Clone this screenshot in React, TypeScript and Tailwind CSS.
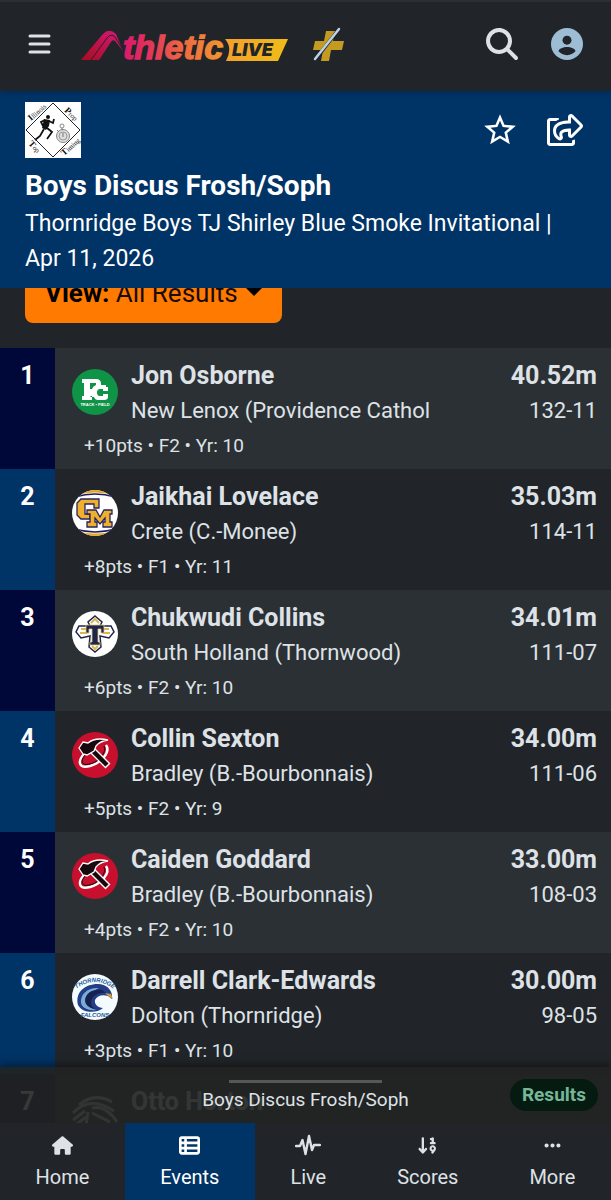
import type { ReactNode } from "react";
import { FaArrowDown19, FaEllipsis, FaHouse, FaMagnifyingGlass, FaTableList } from "react-icons/fa6";
import { FaRegShareSquare } from "react-icons/fa";
import { MdStarBorder } from "react-icons/md";

type Result = {
  place: number;
  name: string;
  school: string;
  mark: string;
  imperial: string;
  meta: string;
  logo: ReactNode;
};

function ProvidenceLogo() {
  return (
    <svg viewBox="0 0 46 46" className="size-full" aria-hidden="true">
      <circle cx="23" cy="23" r="23" fill="#0f9347" />
      <path
        fill="#fff"
        fillRule="evenodd"
        d="M10 10H24Q29 10 29 15V16H34V18H36V22H31V20H28Q25 20 25 23.500Q25 27 28 27H31V25H36V28Q36 31 32 31H26Q23 31 22 28H18.500V27H20V31H10V27H12V14H10ZM18 14V20H20Q21 17 24 16V14Z"
      />
      <text x="23" y="37" textAnchor="middle" fill="#fff" fontSize="4" fontWeight="700" fontFamily="Liberation Sans, sans-serif">
        TRACK • FIELD
      </text>
    </svg>
  );
}

function CreteLogo() {
  return (
    <svg viewBox="0 0 46 46" className="size-full" aria-hidden="true">
      <clipPath id="crete">
        <circle cx="23" cy="23" r="23" />
      </clipPath>
      <g clipPath="url(#crete)">
        <path fill="#fff" d="M0 0H46V46H0z" />
        <path fill="#e5a823" d="M0 0H46V6Q23-1 0 6ZM0 46H46V40Q23 47 0 40Z" />
        <path fill="none" stroke="#1d1b5e" strokeWidth="1.500" d="M3 7Q23 1 43 7M3 39Q23 45 43 39" />
        <path
          fill="#eeb02d"
          stroke="#27235f"
          strokeWidth="1.300"
          d="M9 9H27V18H22V14H13V24H18V29H9L5 25V13Z"
        />
        <path
          fill="#eeb02d"
          stroke="#27235f"
          strokeWidth="1.300"
          d="M15 20H24L28 27L32 20H40V24H38V32H40V37H31V32H33V28L28 34L23 28V32H25V37H15V32H18V24H15Z"
        />
      </g>
    </svg>
  );
}

function ThornwoodLogo() {
  return (
    <svg viewBox="0 0 46 46" className="size-full" aria-hidden="true">
      <circle cx="23" cy="23" r="23" fill="#fff" />
      <path
        fill="#fff"
        stroke="#20264b"
        strokeWidth="1.500"
        d="M23 5L30 11L28 15L39 15L42 21L37 27L28 25L29 36L23 41L17 36L18 25L9 27L4 21L7 15L18 15L16 11Z"
      />
      <path
        fill="none"
        stroke="#d8b84c"
        strokeWidth="2"
        d="M19 12L23 8L27 12M9 18H15M37 18H31M8 22H15M38 22H31M20 35L23 38L26 35"
      />
      <path fill="#20264b" stroke="#d8c47a" strokeWidth="0.800" d="M14 14H32V22H29V18H26V31H28V34H18V31H20V18H17V22H14Z" />
    </svg>
  );
}

function BradleyLogo() {
  return (
    <svg viewBox="0 0 46 46" className="size-full" aria-hidden="true">
      <circle cx="23" cy="23" r="23" fill="#c8102e" />
      <path fill="none" stroke="#fff" strokeWidth="2.500" d="M12 22C5 30 7 37 18 34C29 31 39 20 34 13" />
      <path fill="none" stroke="#17090d" strokeWidth="1" d="M13 23C8 29 9 34 18 32C27 30 35 20 32 14" />
      <path fill="none" stroke="#fff" strokeWidth="7" d="M18 16L36 34" />
      <path fill="none" stroke="#17090d" strokeWidth="4.500" d="M18 16L35 33" />
      <path
        fill="#17090d"
        stroke="#fff"
        strokeWidth="1.300"
        d="M7 16L11 10L16 11Q23 5 36 8Q28 9 24 14L22 19L15 23L11 22Z"
      />
    </svg>
  );
}

function ThornridgeLogo() {
  return (
    <svg viewBox="0 0 46 46" className="size-full" aria-hidden="true">
      <defs>
        <path id="falcon-top" d="M4 15Q23 1 42 15" />
      </defs>
      <circle cx="23" cy="23" r="23" fill="#f4fbff" />
      <g fill="#215c96" fontSize="6" fontWeight="700" fontStyle="italic" fontFamily="Liberation Sans, sans-serif">
        <text textAnchor="middle">
          <textPath href="#falcon-top" startOffset="50%">
            THORNRIDGE
          </textPath>
        </text>
        <text x="23" y="43" textAnchor="middle">
          FALCONS
        </text>
      </g>
      <path
        fill="#233d86"
        d="M6 31C3 19 12 10 26 10C34 10 39 15 40 21L40 25L36 22C30 20 25 22 23 26C22 30 26 34 31 34C24 40 10 39 6 31Z"
      />
      <path fill="#79add8" d="M9 29C8 20 16 13 27 14C20 17 15 22 16 29C17 33 21 35 24 36C17 37 10 34 9 29Z" />
      <path fill="#17224e" d="M13 26C14 19 20 15 30 16L34 19C25 18 19 23 19 29C19 32 21 34 23 35C17 34 13 31 13 26Z" />
      <path fill="#d19a37" d="M33 19L39 20L41 25L36 22Z" />
    </svg>
  );
}

function LionLogo() {
  return (
    <svg viewBox="0 0 46 46" className="size-full" aria-hidden="true">
      <path
        fill="none"
        stroke="#c9ced2"
        strokeWidth="3"
        d="M7 10Q22-3 40 7M1 18Q18 0 42 16M20 13Q34 10 45 27M1 25L13 16M2 31L14 22M16 17L14 31M20 18L38 27"
      />
    </svg>
  );
}

function MeetLogo() {
  return (
    <svg viewBox="0 0 56 56" className="size-14" role="img" aria-label="Illinois Prop Top Timing">
      <path fill="#fff" d="M0 0H56V56H0z" />
      <path fill="none" stroke="#222" d="M28 1L55 28L28 55L1 28Z" />
      <g fill="#111" fontFamily="Liberation Serif, serif" fontSize="7">
        <text transform="translate(6 19) rotate(-41)">
          <tspan fontSize="9" fontWeight="700">I</tspan>llinois
        </text>
        <text transform="translate(39 9) rotate(44)">
          <tspan fontSize="9" fontWeight="700">P</tspan>rop
        </text>
        <text transform="translate(3 42) rotate(46)">
          <tspan fontSize="9" fontWeight="700">T</tspan>op
        </text>
        <text transform="translate(39 54) rotate(-42)">
          <tspan fontSize="9" fontWeight="700">T</tspan>iming
        </text>
      </g>
      <circle cx="23" cy="15" r="2" fill="#111" />
      <path fill="#111" d="M19 17L25 18L24 24L21 28L17 26Z" />
      <path
        fill="none"
        stroke="#111"
        strokeWidth="1.800"
        d="M20 18L16 20L18 24M24 19L28 21L29 17M22 26L27 30L22 37M19 27L15 34L10 38"
      />
      <circle cx="38" cy="34" r="6.500" fill="#ddd" stroke="#888" />
      <circle cx="38" cy="34" r="4" fill="none" stroke="#999" />
      <circle cx="37" cy="24" r="2" fill="none" stroke="#888" />
      <path stroke="#777" d="M37 26V28M38 31V35M32 28L34 30" />
    </svg>
  );
}

function AthleticLiveLogo() {
  return (
    <svg viewBox="0 0 208 36" className="h-9 w-[208px]" role="img" aria-label="AthleticLIVE">
      <defs>
        <linearGradient id="word" gradientUnits="userSpaceOnUse" x1="40" y1="0" x2="145" y2="0">
          <stop offset="0" stopColor="#d8186c" />
          <stop offset="0.250" stopColor="#e2305e" />
          <stop offset="0.600" stopColor="#ee6a40" />
          <stop offset="1" stopColor="#f29a2e" />
        </linearGradient>
        <linearGradient id="peak" x1="0" y1="1" x2="1" y2="0">
          <stop offset="0" stopColor="#a80d20" />
          <stop offset="1" stopColor="#d8187a" />
        </linearGradient>
        <linearGradient id="badge" x1="0" y1="0" x2="1" y2="0">
          <stop offset="0" stopColor="#f2a02c" />
          <stop offset="1" stopColor="#f0bd18" />
        </linearGradient>
      </defs>
      <path fill="url(#peak)" d="M0 34L21 9Q28 1 35 8L42 25L34 15Q32 13 30 16L18 34Z" />
      <path fill="none" stroke="#212529" strokeWidth="1" d="M10 34L26 12Q30 7 34 11L42 24" />
      <text
        x="42"
        y="33"
        fill="url(#word)"
        stroke="url(#word)"
        strokeWidth="1.300"
        fontFamily="Liberation Sans, sans-serif"
        fontSize="34"
        fontWeight="700"
        fontStyle="italic"
      >
        thletic
      </text>
      <path fill="url(#badge)" d="M144 13H207L197 35H145Q152 22 144 13Z" />
      <text
        x="151"
        y="30"
        fill="#212529"
        fontFamily="Inter, Roboto, sans-serif"
        fontSize="18"
        fontWeight="900"
        fontStyle="italic"
      >
        LIVE
      </text>
    </svg>
  );
}

function PlusLogo() {
  return (
    <svg viewBox="0 -2 32 36" className="h-9 w-8" aria-hidden="true">
      <path fill="#c39a22" d="M13 3H22L20 13H31L29 22H18L16 33H8L10 22H0L2 13H11Z" />
      <path stroke="#212529" strokeWidth="3.500" d="M2 32L26 1" />
      <path stroke="#b9d4ea" strokeWidth="2.500" strokeLinecap="round" d="M2 31L26 1" />
    </svg>
  );
}

function PulseIcon() {
  return (
    <svg viewBox="0 0 26 22" className="h-[22px] w-[26px]" fill="none" stroke="currentColor" aria-hidden="true">
      <path
        strokeWidth="2.400"
        strokeLinecap="round"
        strokeLinejoin="round"
        d="M1 12H5L7.500 6L10.500 20L14 2L17 16L19 11H25"
      />
    </svg>
  );
}

const results: Result[] = [
  { place: 1, name: "Jon Osborne", school: "New Lenox (Providence Cathol", mark: "40.52m", imperial: "132-11", meta: "+10pts • F2 • Yr: 10", logo: <ProvidenceLogo /> },
  { place: 2, name: "Jaikhai Lovelace", school: "Crete (C.-Monee)", mark: "35.03m", imperial: "114-11", meta: "+8pts • F1 • Yr: 11", logo: <CreteLogo /> },
  { place: 3, name: "Chukwudi Collins", school: "South Holland (Thornwood)", mark: "34.01m", imperial: "111-07", meta: "+6pts • F2 • Yr: 10", logo: <ThornwoodLogo /> },
  { place: 4, name: "Collin Sexton", school: "Bradley (B.-Bourbonnais)", mark: "34.00m", imperial: "111-06", meta: "+5pts • F2 • Yr: 9", logo: <BradleyLogo /> },
  { place: 5, name: "Caiden Goddard", school: "Bradley (B.-Bourbonnais)", mark: "33.00m", imperial: "108-03", meta: "+4pts • F2 • Yr: 10", logo: <BradleyLogo /> },
  { place: 6, name: "Darrell Clark-Edwards", school: "Dolton (Thornridge)", mark: "30.00m", imperial: "98-05", meta: "+3pts • F1 • Yr: 10", logo: <ThornridgeLogo /> },
  { place: 7, name: "Otto Horton", school: "", mark: "", imperial: "", meta: "", logo: <LionLogo /> },
];

const tabs = [
  { label: "Home", icon: <FaHouse size={21} /> },
  { label: "Events", icon: <FaTableList size={21} />, active: true },
  { label: "Live", icon: <PulseIcon /> },
  { label: "Scores", icon: <FaArrowDown19 size={21} /> },
  { label: "More", icon: <FaEllipsis size={19} /> },
];

function ResultRow({ result }: { result: Result }) {
  return (
    <li className="group flex h-[121px]">
      <div className="w-[55px] shrink-0 bg-[#003366] pt-[10px] text-center text-[25px] leading-[35px] font-bold text-white group-odd:bg-[#000839]">
        {result.place}
      </div>
      <div className="min-w-0 flex-1 pt-[10px] pr-[14px] pl-[17px] group-odd:bg-[#2b3035]">
        <div className="flex">
          <div className="mt-[11px] mr-[13px] size-[46px] shrink-0">{result.logo}</div>
          <div className="min-w-0 flex-1">
            <p className="truncate text-[25px] leading-[35px] font-bold">{result.name}</p>
            <p className="truncate text-[22px] leading-9">{result.school}</p>
          </div>
          <div className="shrink-0 text-right">
            <p className="text-[25px] leading-[35px] font-bold">{result.mark}</p>
            <p className="text-[22px] leading-9">{result.imperial}</p>
          </div>
        </div>
        <p className="pl-3 text-[19px] leading-[34px]">{result.meta}</p>
      </div>
    </li>
  );
}

export default function App() {
  return (
    <div className="flex h-screen flex-col overflow-hidden bg-[#212529] font-[Roboto,sans-serif] text-[#dee2e6]">
      <header className="relative z-10 flex h-[91px] shrink-0 items-center border-t-2 border-[#2b2f33] pr-7 pb-[5px] pl-7 shadow-md">
        <button type="button" aria-label="Menu" className="mr-[29px]">
          <svg viewBox="0 0 24 22" className="h-[22px] w-6" stroke="currentColor" aria-hidden="true">
            <path strokeWidth="3" strokeLinecap="round" d="M2 3H21M2 11H21M2 19H21" />
          </svg>
        </button>
        <a href="#home" className="flex items-center gap-6">
          <AthleticLiveLogo />
          <PlusLogo />
        </a>
        <div className="ml-auto flex items-center gap-[33px]">
          <button type="button" aria-label="Search">
            <FaMagnifyingGlass size={32} />
          </button>
          <button type="button" aria-label="Account">
            <svg viewBox="2 2 20 20" className="size-8" aria-hidden="true">
              <circle cx="12" cy="12" r="10" fill="#9dbdd5" />
              <circle cx="12" cy="9.600" r="2.800" fill="#212529" />
              <path
                fill="#212529"
                d="M6.700 16.600c0-1.600 3-2.700 5.300-2.700s5.300 1.100 5.300 2.700C16 18 14.200 19 12 19S8 18 6.700 16.600z"
              />
            </svg>
          </button>
        </div>
      </header>

      <section className="shrink-0 bg-[#003366] px-[25px] pt-[11px] pb-3 text-white">
        <div className="flex items-center justify-between pr-[3px]">
          <MeetLogo />
          <div className="flex items-center gap-7">
            <button type="button" aria-label="Favorite">
              <MdStarBorder size={38} />
            </button>
            <button type="button" aria-label="Share">
              <FaRegShareSquare size={36} />
            </button>
          </div>
        </div>
        <h1 className="pt-[10px] text-[28px] leading-[35px] font-bold">Boys Discus Frosh/Soph</h1>
        <p className="pt-[3px] text-[23px] leading-[35px]">
          Thornridge Boys TJ Shirley Blue Smoke Invitational | Apr 11, 2026
        </p>
      </section>

      <main className="relative min-h-0 flex-1 overflow-hidden">
        <button
          type="button"
          className="-mt-6 mb-[25px] ml-[25px] flex h-[59px] w-[257px] items-center justify-between rounded-lg bg-[#ff7a00] px-5 text-[26px] text-[#1a0a08]"
        >
          <span>
            <b className="text-black">View:</b> All Results
          </span>
          <svg viewBox="0 0 16 8" className="mb-1 h-2 w-4" aria-hidden="true">
            <path d="M0 0H16L8 8Z" />
          </svg>
        </button>
        <ol>
          {results.map((result) => (
            <ResultRow key={result.place} result={result} />
          ))}
        </ol>

        <div className="absolute inset-x-0 bottom-0 h-14 bg-[#212322]/90 shadow-[0_-3px_8px_rgba(0,0,0,0.4)]">
          <div className="mx-auto mt-[13px] h-[3px] w-1/4 bg-[#555759]" />
          <p className="pt-[5px] text-center text-[19px] leading-6">Boys Discus Frosh/Soph</p>
          <span className="absolute top-3 right-[13px] rounded-full bg-[#051b11] px-3 text-[19px] leading-8 font-bold text-[#75b798]">
            Results
          </span>
        </div>
      </main>

      <nav className="flex h-[77px] shrink-0" aria-label="Main">
        {tabs.map((tab) => (
          <a
            key={tab.label}
            href={`#${tab.label.toLowerCase()}`}
            aria-current={tab.active ? "page" : undefined}
            className={`flex flex-auto flex-col items-center pt-[10px] text-xl ${tab.active ? "bg-[#003366] text-white" : ""}`}
          >
            <span className="flex h-6 items-center">{tab.icon}</span>
            <span className="pt-1 leading-8">{tab.label}</span>
          </a>
        ))}
      </nav>
    </div>
  );
}
